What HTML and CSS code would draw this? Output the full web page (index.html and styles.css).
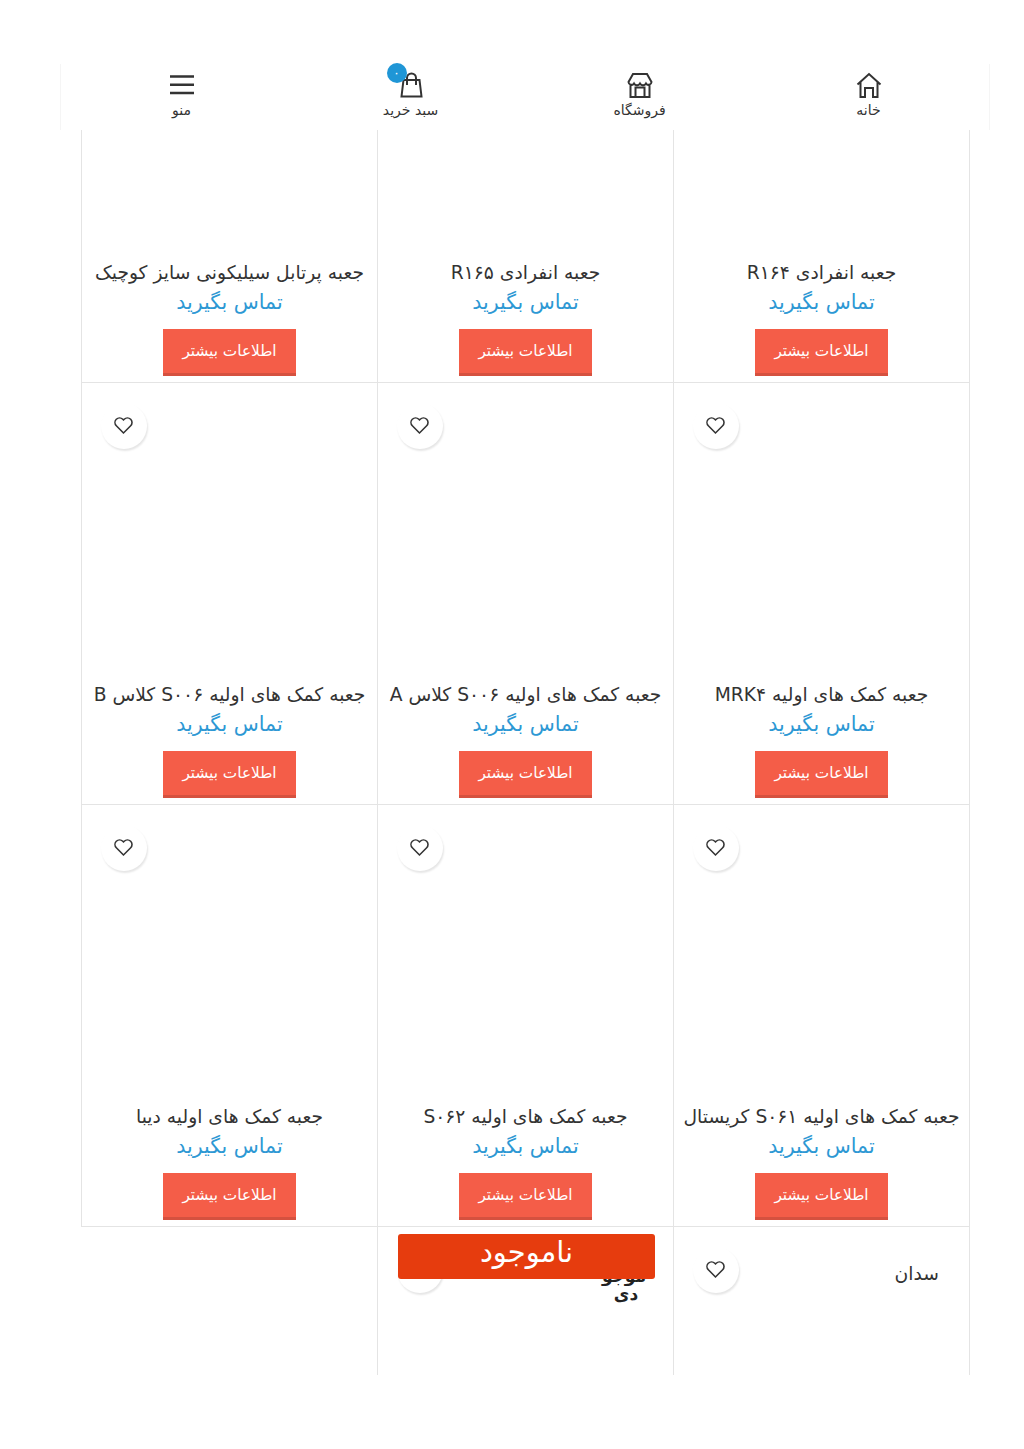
FILE: index.html
```html
<!DOCTYPE html>
<html lang="fa" dir="rtl">
<head>
  <meta charset="UTF-8">
  <meta name="viewport" content="width=device-width, initial-scale=1.0">
  <title>جعبه کمک های اولیه</title>
  <link rel="stylesheet" href="styles.css">
</head>
<body>
  <nav class="bottom-nav">
    <a class="nav-item" href="#">
      <svg class="nav-icon" viewBox="0 0 26 26"><path d="M1.500 12.500 13 2l11.500 10.500M4.500 10v15H9v-9h8v9h4.500V10"/></svg>
      <span>خانه</span>
    </a>
    <a class="nav-item" href="#">
      <svg class="nav-icon" viewBox="0 0 26 26"><path d="M6 2h14l4.500 8a3 3 0 0 1-5.500 1.500 3.500 3.500 0 0 1-6 0 3.500 3.500 0 0 1-6 0A3 3 0 0 1 1.500 10zM3.500 13v12h19V13M8.500 25V15.500h9V25"/></svg>
      <span>فروشگاه</span>
    </a>
    <a class="nav-item" href="#">
      <span class="cart-wrap">
        <svg class="nav-icon" viewBox="0 0 26 26"><path d="M3.500 24.500 5.500 8h16l2 16.500zM9 13V6a4.500 4.500 0 0 1 9 0v7"/></svg>
        <b class="cart-count">۰</b>
      </span>
      <span>سبد خرید</span>
    </a>
    <a class="nav-item" href="#">
      <svg class="nav-icon nav-icon-menu" viewBox="0 0 26 26"><path d="M1 4.500h24M1 12.800h24M1 21h24"/></svg>
      <span>منو</span>
    </a>
  </nav>

  <main class="product-grid">
    <article class="card card-clipped">
      <h3 class="card-title">جعبه انفرادی R۱۶۴</h3>
      <p class="card-price">تماس بگیرید</p>
      <a class="card-btn" href="#">اطلاعات بیشتر</a>
    </article>
    <article class="card card-clipped">
      <h3 class="card-title">جعبه انفرادی R۱۶۵</h3>
      <p class="card-price">تماس بگیرید</p>
      <a class="card-btn" href="#">اطلاعات بیشتر</a>
    </article>
    <article class="card card-clipped">
      <h3 class="card-title">جعبه پرتابل سیلیکونی سایز کوچیک</h3>
      <p class="card-price">تماس بگیرید</p>
      <a class="card-btn" href="#">اطلاعات بیشتر</a>
    </article>

    <article class="card">
      <button class="wish"><svg viewBox="0 0 24 24"><path d="M12 20.500 3.800 12.300a5.200 5.200 0 0 1 7.400-7.400l.8.8.8-.8a5.200 5.200 0 0 1 7.400 7.400z"/></svg></button>
      <h3 class="card-title">جعبه کمک های اولیه MRK۴</h3>
      <p class="card-price">تماس بگیرید</p>
      <a class="card-btn" href="#">اطلاعات بیشتر</a>
    </article>
    <article class="card">
      <button class="wish"><svg viewBox="0 0 24 24"><path d="M12 20.500 3.800 12.300a5.200 5.200 0 0 1 7.400-7.400l.8.8.8-.8a5.200 5.200 0 0 1 7.400 7.400z"/></svg></button>
      <h3 class="card-title">جعبه کمک های اولیه S۰۰۶ کلاس A</h3>
      <p class="card-price">تماس بگیرید</p>
      <a class="card-btn" href="#">اطلاعات بیشتر</a>
    </article>
    <article class="card">
      <button class="wish"><svg viewBox="0 0 24 24"><path d="M12 20.500 3.800 12.300a5.200 5.200 0 0 1 7.400-7.400l.8.8.8-.8a5.200 5.200 0 0 1 7.400 7.400z"/></svg></button>
      <h3 class="card-title">جعبه کمک های اولیه S۰۰۶ کلاس B</h3>
      <p class="card-price">تماس بگیرید</p>
      <a class="card-btn" href="#">اطلاعات بیشتر</a>
    </article>

    <article class="card">
      <button class="wish"><svg viewBox="0 0 24 24"><path d="M12 20.500 3.800 12.300a5.200 5.200 0 0 1 7.400-7.400l.8.8.8-.8a5.200 5.200 0 0 1 7.400 7.400z"/></svg></button>
      <h3 class="card-title">جعبه کمک های اولیه S۰۶۱ کریستال</h3>
      <p class="card-price">تماس بگیرید</p>
      <a class="card-btn" href="#">اطلاعات بیشتر</a>
    </article>
    <article class="card">
      <button class="wish"><svg viewBox="0 0 24 24"><path d="M12 20.500 3.800 12.300a5.200 5.200 0 0 1 7.400-7.400l.8.8.8-.8a5.200 5.200 0 0 1 7.400 7.400z"/></svg></button>
      <h3 class="card-title">جعبه کمک های اولیه S۰۶۲</h3>
      <p class="card-price">تماس بگیرید</p>
      <a class="card-btn" href="#">اطلاعات بیشتر</a>
    </article>
    <article class="card">
      <button class="wish"><svg viewBox="0 0 24 24"><path d="M12 20.500 3.800 12.300a5.200 5.200 0 0 1 7.400-7.400l.8.8.8-.8a5.200 5.200 0 0 1 7.400 7.400z"/></svg></button>
      <h3 class="card-title">جعبه کمک های اولیه دیبا</h3>
      <p class="card-price">تماس بگیرید</p>
      <a class="card-btn" href="#">اطلاعات بیشتر</a>
    </article>

    <article class="card card-last">
      <button class="wish"><svg viewBox="0 0 24 24"><path d="M12 20.500 3.800 12.300a5.200 5.200 0 0 1 7.400-7.400l.8.8.8-.8a5.200 5.200 0 0 1 7.400 7.400z"/></svg></button>
      <span class="card-cat">سدان</span>
    </article>
    <article class="card card-last">
      <button class="wish"><svg viewBox="0 0 24 24"><path d="M12 20.500 3.800 12.300a5.200 5.200 0 0 1 7.400-7.400l.8.8.8-.8a5.200 5.200 0 0 1 7.400 7.400z"/></svg></button>
      <span class="card-stock">موجو دی</span>
      <div class="sold-out">ناموجود</div>
    </article>
  </main>
</body>
</html>
```

FILE: styles.css
```css
* { box-sizing: border-box; }
body {
  margin: 0;
  height: 1449px;
  padding-top: 64px;
  background: #fff;
  color: #333;
  font-family: 'DejaVu Sans', 'Noto Sans', sans-serif;
}
a { color: inherit; text-decoration: none; }

.bottom-nav {
  display: grid;
  grid-template-columns: repeat(4, 1fr);
  width: 930px;
  height: 66px;
  margin: 0 34px 0 60px;
  padding: 0 6px;
  border-left: 1px solid #f5f5f5;
  border-right: 1px solid #f5f5f5;
}
.nav-item {
  display: flex;
  flex-direction: column;
  align-items: center;
  padding-top: 8px;
  font-size: 14px;
  line-height: 24px;
  color: #333;
}
.nav-icon {
  display: block;
  width: 26px;
  height: 26px;
  fill: none;
  stroke: #333;
  stroke-width: 2;
}
.nav-icon-menu { stroke-width: 2.5; }
.cart-wrap { position: relative; display: block; height: 26px; }
.cart-count {
  position: absolute;
  top: -9px;
  right: 17px;
  width: 20px;
  height: 20px;
  border-radius: 50%;
  background: #1f96d6;
  color: #fff;
  font-size: 12px;
  font-weight: 400;
  line-height: 20px;
  text-align: center;
}

.product-grid {
  display: grid;
  grid-template-columns: repeat(3, 296px);
  grid-template-rows: 253px 422px 422px 148px;
  width: 889px;
  height: 1245px;
  margin: 0 54px 0 81px;
  overflow: hidden;
  border-right: 1px solid #e4e4e4;
}
.card {
  position: relative;
  display: flex;
  flex-direction: column;
  align-items: center;
  justify-content: flex-end;
  padding: 0 4px 6px;
  border-left: 1px solid #e4e4e4;
  border-bottom: 1px solid #e4e4e4;
}
.card-title {
  margin: 0;
  font-size: 18.700px;
  font-weight: 400;
  line-height: 24px;
  white-space: nowrap;
  color: #333;
}
.card-price {
  margin: 4px 0 14px;
  font-size: 20.500px;
  line-height: 26px;
  color: #2d98d4;
}
.card-btn {
  display: block;
  width: 133px;
  height: 47px;
  background: #f45d48;
  border-bottom: 3px solid #d5513f;
  color: #fff;
  font-size: 15.300px;
  line-height: 45px;
  text-align: center;
}
.wish {
  position: absolute;
  top: 20px;
  left: 19px;
  display: flex;
  align-items: center;
  justify-content: center;
  width: 46px;
  height: 46px;
  padding: 0 1px 2px 0;
  border: 0;
  border-radius: 50%;
  background: #fff;
  box-shadow: 1px 2px 2px rgba(0, 0, 0, .1);
}
.wish svg {
  width: 21px;
  height: 21px;
  fill: none;
  stroke: #333;
  stroke-width: 1.800;
}

.card-last {
  justify-content: flex-start;
  border-bottom: 0;
}
.card-cat {
  align-self: flex-start;
  margin: 35px 26px 0 0;
  font-size: 18.700px;
  line-height: 24px;
}
.card-stock {
  align-self: flex-start;
  width: 40px;
  margin: 40px 23px 0 0;
  font-size: 17px;
  font-weight: 700;
  line-height: 18px;
  text-align: center;
  color: #222;
}
.sold-out {
  position: absolute;
  top: 7px;
  left: 20px;
  width: 257px;
  height: 45px;
  border-radius: 3px;
  background: #e63c0e;
  color: #fff;
  font-size: 29px;
  line-height: 37px;
  text-align: center;
}
```
